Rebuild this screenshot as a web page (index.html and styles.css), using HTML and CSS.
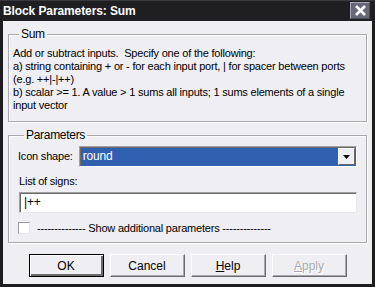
FILE: index.html
```html
<!DOCTYPE html>
<html lang="en">
	<head>
		<meta charset="UTF-8">
		<title>Block Parameters: Sum</title>
		<link rel="stylesheet" href="styles.css">
	</head>
	<body>
		<div class="window">
			<div class="titlebar">
				<span class="title">Block Parameters: Sum</span>
				<span class="close">
					<svg width="13" height="11" viewBox="0 0 13 11">
						<path d="M2 1 L11 10 M11 1 L2 10" stroke="#fff" stroke-width="2.6" />
					</svg>
				</span>
			</div>
			<div class="client">
				<fieldset class="group group-sum">
					<legend>Sum</legend>
					<p class="desc">
						Add or subtract inputs.&nbsp; Specify one of the following:<br>
						a) string containing + or - for each input port, | for spacer between ports<br>
						(e.g. ++|-|++)<br>
						b) scalar &gt;= 1. A value &gt; 1 sums all inputs; 1 sums elements of a single<br>
						input vector
					</p>
				</fieldset>

				<fieldset class="group group-params">
					<legend>Parameters</legend>
					<div class="row">
						<span class="label">Icon shape:</span>
						<div class="select">
							<span class="select-value">round</span>
							<span class="select-btn">
								<svg width="7" height="4" viewBox="0 0 7 4"><path d="M0 0 H7 L3.5 4 Z" fill="#000" /></svg>
							</span>
						</div>
					</div>
					<div class="label label-block">List of signs:</div>
					<div class="edit">|++</div>
					<div class="check-row">
						<span class="checkbox"></span>
						<span>-------------- Show additional parameters --------------</span>
					</div>
				</fieldset>

				<div class="buttons">
					<span class="btn btn-default">OK</span>
					<span class="btn">Cancel</span>
					<span class="btn"><u>H</u>elp</span>
					<span class="btn btn-disabled"><u>A</u>pply</span>
				</div>
			</div>
		</div>
	</body>
</html>
```

FILE: styles.css
```css
* {
	margin: 0;
	padding: 0;
	box-sizing: border-box;
}

body {
	background: #1d1d1f;
	font-family: "Liberation Sans", Arial, sans-serif;
	font-size: 11px;
	letter-spacing: -0.2px;
	color: #000;
}

.window {
	width: 375px;
	height: 287px;
	display: flex;
	flex-direction: column;
}

.titlebar {
	height: 21px;
	display: flex;
	align-items: center;
	justify-content: space-between;
	padding: 0 5px 0 3px;
	background: #1f1f21;
	border-top: 1px solid #3a3a3e;
}

.title {
	color: #fff;
	font-weight: bold;
	font-size: 12px;
	letter-spacing: -0.1px;
}

.close {
	width: 20px;
	height: 17px;
	margin-top: -2px;
	display: flex;
	align-items: center;
	justify-content: center;
	background: #67677a;
	border: 1px solid #a9a9b8;
	border-right-color: #4a4a56;
	border-bottom-color: #4a4a56;
}

.client {
	margin: 0 3px;
	height: 263px;
	background: #efeef3;
	padding: 7px 5px 0 5px;
	display: flex;
	flex-direction: column;
	white-space: nowrap;
}

.group {
	border: 1px solid #a9a9ad;
	box-shadow: 1px 1px 0 #fff, inset 1px 1px 0 #fff;
	padding: 0 9px 0 4px;
}

.group legend {
	margin-left: 6px;
	padding: 0 2px 0 2px;
	line-height: 13px;
	font-size: 12px;
	letter-spacing: -0.3px;
}

.group-sum {
	height: 94px;
}

.desc {
	padding-top: 6px;
	line-height: 13px;
}

.group-params {
	margin-top: 7px;
	height: 114px;
	padding: 4px 9px 0 9px;
}

.row {
	display: flex;
	align-items: center;
	gap: 6px;
}

.label {
	line-height: 13px;
}

.label-block {
	margin-top: 8px;
	margin-left: 1px;
}

.select {
	flex: 1;
	height: 21px;
	display: flex;
	border: 1px solid #a0a0a0;
	border-right-color: #fff;
	border-bottom-color: #fff;
	box-shadow: inset 1px 1px 0 #6a6a6a;
	padding: 1px;
	background: #3160b0;
}

.select-value {
	flex: 1;
	color: #fff;
	font-size: 12px;
	line-height: 17px;
	padding-left: 2px;
}

.select-btn {
	width: 17px;
	display: flex;
	align-items: center;
	justify-content: center;
	background: #efeef3;
	border: 1px solid #fff;
	border-right-color: #6a6a6a;
	border-bottom-color: #6a6a6a;
}

.edit {
	margin: 4px 0 0 1px;
	height: 21px;
	background: #fff;
	border: 1px solid #a0a0a0;
	border-right-color: #e8e8ea;
	border-bottom-color: #e8e8ea;
	box-shadow: inset 1px 1px 0 #6a6a6a;
	padding-left: 4px;
	line-height: 19px;
	font-size: 12px;
}

.check-row {
	margin-top: 9px;
	display: flex;
	align-items: center;
	gap: 7px;
}

.checkbox {
	width: 12px;
	height: 12px;
	background: #fff;
	border: 1px solid #9a9a9a;
	border-right-color: #e8e8ea;
	border-bottom-color: #e8e8ea;
}

.buttons {
	margin-top: 11px;
	display: flex;
	justify-content: center;
	gap: 6px;
}

.btn {
	width: 75px;
	height: 23px;
	display: flex;
	align-items: center;
	justify-content: center;
	font-size: 12px;
	letter-spacing: 0;
	background: #efeef3;
	border: 1px solid #fff;
	border-right-color: #6a6a6a;
	border-bottom-color: #6a6a6a;
	box-shadow: inset -1px -1px 0 #a9a9ad;
}

.btn u {
	text-decoration: underline;
}

.btn-default {
	border: 1px solid #000;
	box-shadow: inset 1px 1px 0 #fff, inset -2px -2px 0 #6a6a6a;
}

.btn-disabled {
	color: #a9a9ad;
	text-shadow: 1px 1px 0 #fff;
}
```
